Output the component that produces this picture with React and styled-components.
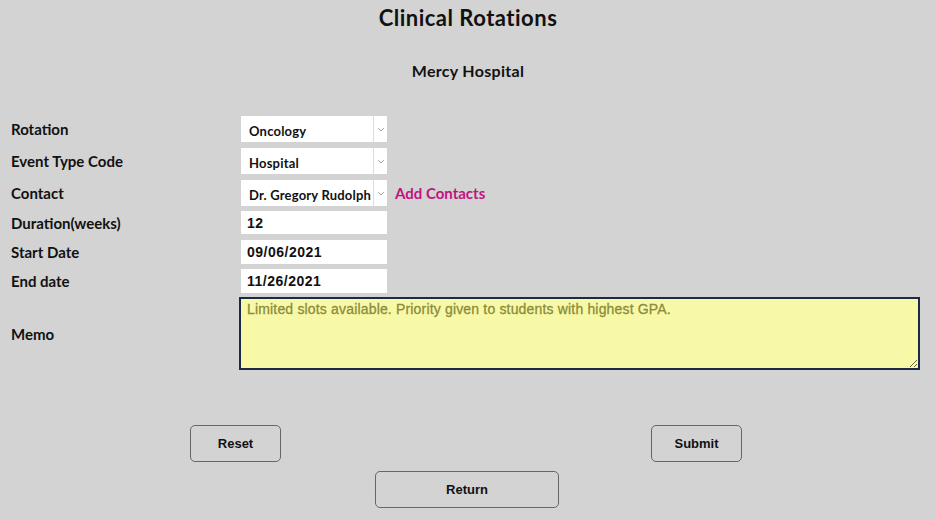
import React from "react";
import styled, { createGlobalStyle } from "styled-components";

const GlobalStyle = createGlobalStyle`
  html, body {
    margin: 0;
    padding: 0;
    background: #d3d3d3;
  }
  body {
    font-family: "Lato", "Noto Sans", sans-serif;
    color: #111;
  }
`;

const selects = [
  { label: "Rotation", value: "Oncology", gap: 6 },
  { label: "Event Type Code", value: "Hospital", gap: 6 },
  { label: "Contact", value: "Dr. Gregory Rudolph", link: "Add Contacts", gap: 5 },
];

const inputs = [
  { label: "Duration(weeks)", value: "12", h: 23, gap: 6 },
  { label: "Start Date", value: "09/06/2021", h: 24, gap: 5 },
  { label: "End date", value: "11/26/2021", h: 24, gap: 4 },
];

const App = () => {
  return (
    <Page>
      <GlobalStyle />
      <Title>Clinical Rotations</Title>
      <SubTitle>Mercy Hospital</SubTitle>
      <Form>
        {selects.map((s) => (
          <Row key={s.label} $gap={s.gap}>
            <Label>{s.label}</Label>
            <Field>
              <SelectBox>
                <SelectText>{s.value}</SelectText>
                <Arrow>
                  <svg width="8" height="5" viewBox="0 0 8 5">
                    <path d="M1 1l3 3 3-3" fill="none" stroke="#a8a8a8" strokeWidth="1" />
                  </svg>
                </Arrow>
              </SelectBox>
              {s.link && <AddLink href="#">{s.link}</AddLink>}
            </Field>
          </Row>
        ))}
        {inputs.map((i) => (
          <Row key={i.label} $gap={i.gap}>
            <Label>{i.label}</Label>
            <Field>
              <TextInput defaultValue={i.value} $h={i.h} />
            </Field>
          </Row>
        ))}
        <Row $gap={0}>
          <Label>Memo</Label>
          <Field>
            <Memo
              readOnly
              defaultValue="Limited slots available. Priority given to students with highest GPA."
            />
          </Field>
        </Row>
      </Form>
      <Actions>
        <Button $w={91}>Reset</Button>
        <Button $w={91}>Submit</Button>
      </Actions>
      <ReturnRow>
        <Button $w={184}>Return</Button>
      </ReturnRow>
    </Page>
  );
};

export default App;

const Page = styled.div`
  width: 936px;
  height: 519px;
  overflow: hidden;
  padding-top: 5px;
  box-sizing: border-box;
`;

const Title = styled.h1`
  margin: 0;
  text-align: center;
  font-size: 22px;
  font-weight: 700;
  line-height: 26px;
  letter-spacing: 0.5px;
`;

const SubTitle = styled.h2`
  margin: 30px 0 0;
  text-align: center;
  font-size: 16px;
  font-weight: 700;
  line-height: 20px;
  letter-spacing: 0.3px;
`;

const Form = styled.div`
  margin-top: 35px;
  display: flex;
  flex-direction: column;
`;

const Row = styled.div`
  display: grid;
  grid-template-columns: 230px 1fr;
  align-items: center;
  padding-left: 11px;
  margin-bottom: ${(p) => p.$gap}px;
`;

const Label = styled.div`
  font-size: 15px;
  font-weight: 700;
  line-height: 18px;
`;

const Field = styled.div`
  display: flex;
  align-items: center;
  gap: 8px;
`;

const SelectBox = styled.div`
  width: 146px;
  height: 26px;
  background: #fff;
  display: flex;
  align-items: stretch;
  box-sizing: border-box;
`;

const SelectText = styled.div`
  flex: 1;
  display: flex;
  align-items: center;
  padding: 3px 0 0 8px;
  font-size: 13px;
  font-weight: 700;
  letter-spacing: 0.2px;
  white-space: nowrap;
  overflow: hidden;
`;

const Arrow = styled.div`
  width: 13px;
  border-left: 1px solid #dcdcdc;
  display: flex;
  align-items: center;
  justify-content: center;
`;

const AddLink = styled.a`
  color: #c1137f;
  font-size: 15px;
  font-weight: 700;
  text-decoration: none;
`;

const TextInput = styled.input`
  width: 146px;
  height: ${(p) => p.$h}px;
  box-sizing: border-box;
  border: none;
  outline: none;
  background: #fff;
  padding: 0 6px;
  font-family: "Liberation Sans", Arial, sans-serif;
  font-size: 14px;
  font-weight: 700;
  letter-spacing: 0.5px;
  color: #111;
`;

const Memo = styled.textarea`
  width: 681px;
  height: 73px;
  margin-left: -2px;
  box-sizing: border-box;
  border: 2px solid #1c2a44;
  background: #f8f9a6;
  color: #8c8c3c;
  padding: 2px 6px;
  font-family: "Liberation Sans", Arial, sans-serif;
  font-size: 14px;
  font-weight: 400;
  letter-spacing: 0.17px;
  -webkit-text-stroke: 0.3px #8c8c3c;
  outline: none;
  resize: both;
`;

const Actions = styled.div`
  display: flex;
  justify-content: space-between;
  padding: 0 194px 0 190px;
  margin-top: 55px;
`;

const ReturnRow = styled.div`
  display: flex;
  padding-left: 375px;
  margin-top: 9px;
`;

const Button = styled.button`
  width: ${(p) => p.$w}px;
  height: 37px;
  box-sizing: border-box;
  border: 1px solid #666;
  border-radius: 5px;
  background: transparent;
  font-family: "Liberation Sans", Arial, sans-serif;
  font-size: 13px;
  font-weight: 700;
  color: #111;
  cursor: pointer;
`;
